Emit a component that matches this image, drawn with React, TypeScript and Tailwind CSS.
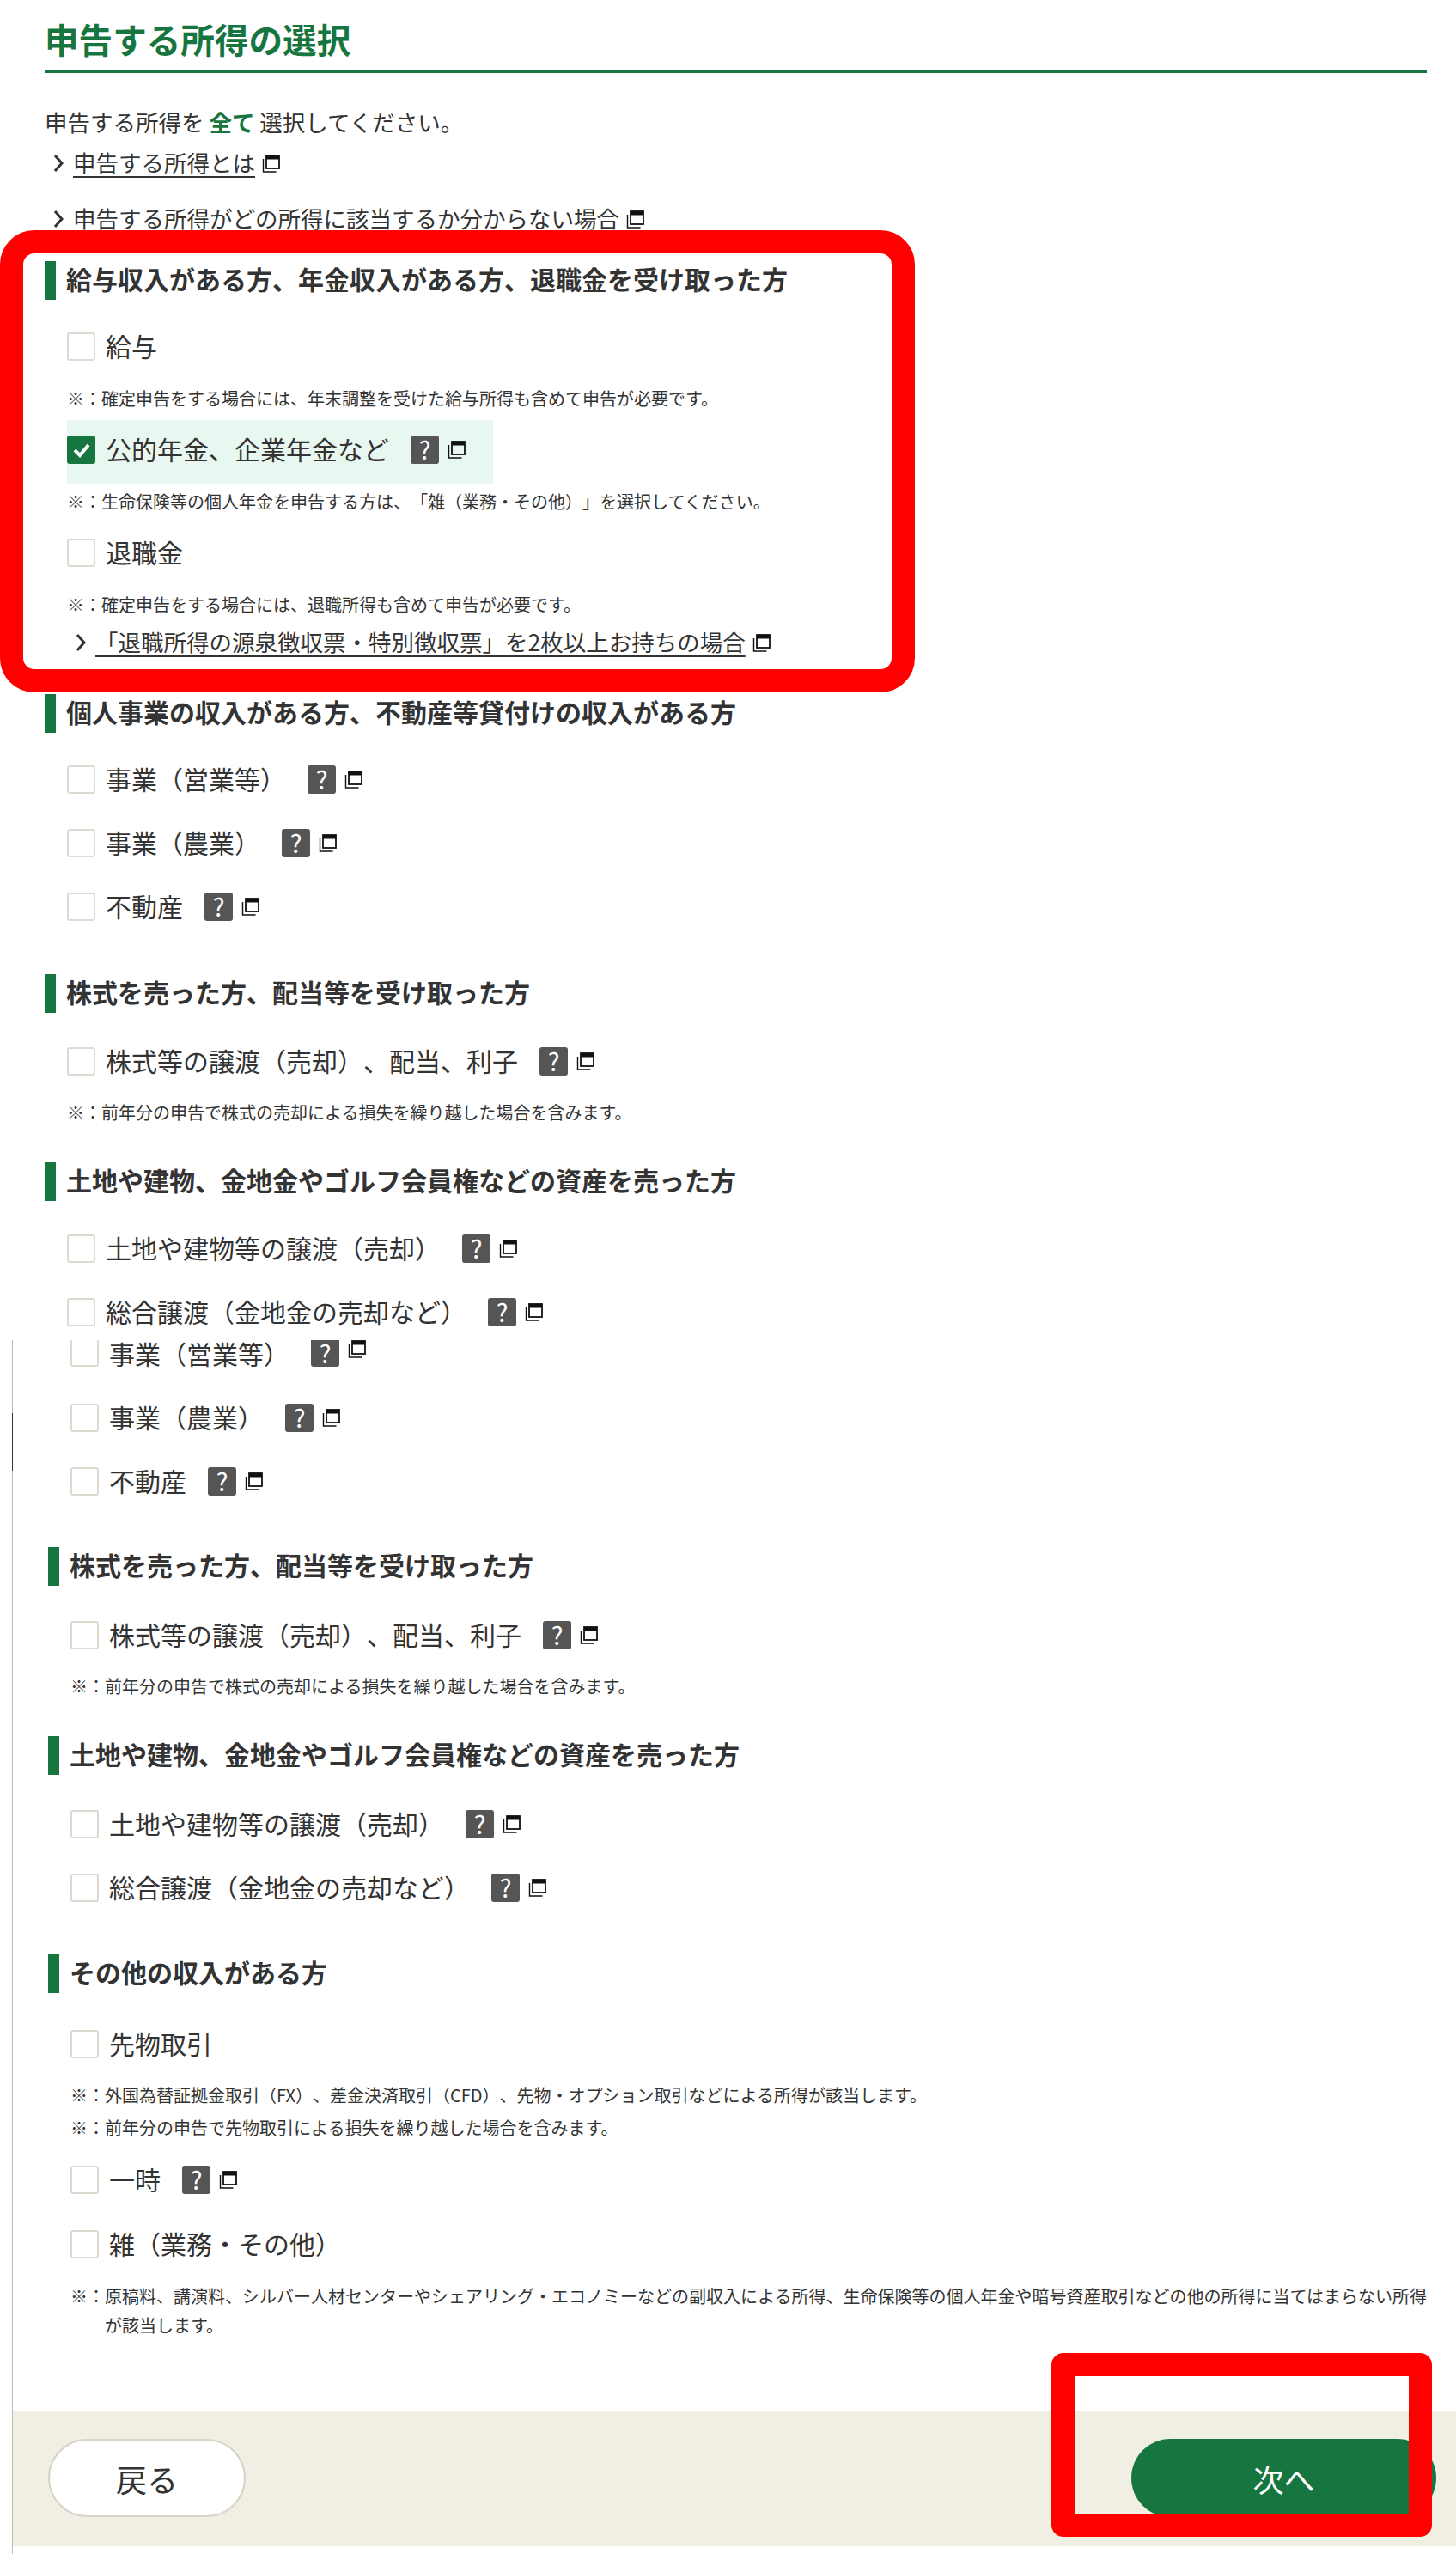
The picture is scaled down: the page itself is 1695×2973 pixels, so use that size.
import React from "react";

const FONT = "font-['Noto_Sans_CJK_JP','Noto_Sans',sans-serif] [text-spacing-trim:space-all]";

// small "opens in new window" mark
const NewWindow = () => (
  <svg width="21" height="21" viewBox="0 0 21 21" className="shrink-0">
    <rect x="5" y="1" width="15" height="15" fill="none" stroke="#111" strokeWidth="1.8" />
    <rect x="5" y="1" width="15" height="4.5" fill="#111" />
    <path d="M1.5 5v15h15" fill="none" stroke="#111" strokeWidth="1.4" />
  </svg>
);

const Help = ({ cut }: { cut?: boolean }) => (
  <span
    className={`ml-[25px] mr-[10px] flex w-[33px] shrink-0 items-center justify-center bg-[#555555] pb-[2px] text-[29px] leading-none text-white ${
      cut ? "h-[31px] rounded-b-[3px]" : "h-[33px] rounded-[3px]"
    }`}
  >
    ?
  </span>
);

const Chevron = () => (
  <svg width="12" height="22" viewBox="0 0 12 22" className="shrink-0">
    <path d="M2 2l8 9-8 9" fill="none" stroke="#333" strokeWidth="3" />
  </svg>
);

const SectionHead = ({ title, className }: { title: string; className: string }) => (
  <h3
    className={`flex h-[45px] items-center border-l-[13px] border-[#17763f] pb-[5px] pl-[12px] text-[30px] leading-none font-bold text-[#333333] ${className}`}
  >
    {title}
  </h3>
);

const Option = ({
  label,
  help,
  checked,
  cut,
  className = "",
}: {
  label: string;
  help?: boolean;
  checked?: boolean;
  cut?: boolean;
  className?: string;
}) => (
  <div className={`flex items-center ${cut ? "h-[31px] items-start" : "h-[33px]"} ${className}`}>
    {checked ? (
      <span className="flex h-[33px] w-[33px] shrink-0 items-center justify-center rounded-[3px] bg-[#17763f]">
        <svg width="22" height="18" viewBox="0 0 22 18">
          <path d="M3 9l6 6L19 3" fill="none" stroke="#fff" strokeWidth="4" />
        </svg>
      </span>
    ) : cut ? (
      <span className="h-[31px] w-[33px] shrink-0 rounded-b-[3px] border-x-2 border-b-2 border-[#dedad2] bg-white" />
    ) : (
      <span className="h-[33px] w-[33px] shrink-0 rounded-[3px] border-2 border-[#dedad2] bg-white" />
    )}
    <span
      className={`ml-[12px] text-[30px] leading-none whitespace-nowrap text-[#333333] ${cut ? "" : "pb-[4px]"}`}
    >
      {label}
    </span>
    {help && <Help cut={cut} />}
    {help && <NewWindow />}
  </div>
);

const Note = ({ text, className }: { text: string; className: string }) => (
  <p
    className={`flex h-[28px] items-center pb-[2px] text-[20px] leading-none whitespace-nowrap text-[#333333] ${className}`}
  >
    {text}
  </p>
);

const DocLink = ({ text, className }: { text: string; className: string }) => (
  <div
    className={`flex h-[36px] items-center text-[26.5px] leading-none whitespace-nowrap text-[#333333] ${className}`}
  >
    <Chevron />
    <span className="ml-[11px] pb-[2px] underline underline-offset-[5px]">{text}</span>
    <span className="ml-[8px]">
      <NewWindow />
    </span>
  </div>
);

export default function App() {
  return (
    <div className={`relative h-[2973px] w-[1695px] overflow-hidden bg-white ${FONT}`}>
      {/* upper capture */}
      <div className="h-[1560px] overflow-hidden pr-[34px] pl-[52px]">
        <h2 className="border-b-[3px] border-[#17763f] pt-[23px] pb-[15px] text-[39.6px] leading-[44px] font-bold text-[#17763f]">
          申告する所得の選択
        </h2>
        <p className="mt-[40px] flex h-[36px] items-center pb-[2px] text-[26.5px] leading-none whitespace-pre text-[#333333]">
          申告する所得を <b className="text-[#17763f]">全て</b> 選択してください。
        </p>
        <DocLink text="申告する所得とは" className="mt-[11px] ml-[10px]" />
        <DocLink text="申告する所得がどの所得に該当するか分からない場合" className="mt-[29px] ml-[10px]" />

        <SectionHead title="給与収入がある方、年金収入がある方、退職金を受け取った方" className="mt-[31px]" />
        <div className="pl-[26px]">
          <Option label="給与" className="mt-[38px]" />
          <Note text="※：確定申告をする場合には、年末調整を受けた給与所得も含めて申告が必要です。" className="mt-[31px]" />
          <div className="mt-[10px] w-[496px] bg-[#e8f7f0] pt-[18px] pb-[23px]">
            <Option label="公的年金、企業年金など" help checked />
          </div>
          <Note text="※：生命保険等の個人年金を申告する方は、「雑（業務・その他）」を選択してください。" className="mt-[8px]" />
          <Option label="退職金" className="mt-[28px]" />
          <Note text="※：確定申告をする場合には、退職所得も含めて申告が必要です。" className="mt-[31px]" />
          <DocLink text="「退職所得の源泉徴収票・特別徴収票」を2枚以上お持ちの場合" className="mt-[11px] ml-[10px]" />
        </div>

        <SectionHead title="個人事業の収入がある方、不動産等貸付けの収入がある方" className="mt-[42px]" />
        <div className="pl-[26px]">
          <Option label="事業（営業等）" help className="mt-[38px]" />
          <Option label="事業（農業）" help className="mt-[41px]" />
          <Option label="不動産" help className="mt-[41px]" />
        </div>

        <SectionHead title="株式を売った方、配当等を受け取った方" className="mt-[62px]" />
        <div className="pl-[26px]">
          <Option label="株式等の譲渡（売却）、配当、利子" help className="mt-[40px]" />
          <Note text="※：前年分の申告で株式の売却による損失を繰り越した場合を含みます。" className="mt-[30px]" />
        </div>

        <SectionHead title="土地や建物、金地金やゴルフ会員権などの資産を売った方" className="mt-[43px]" />
        <div className="pl-[26px]">
          <Option label="土地や建物等の譲渡（売却）" help className="mt-[39px]" />
          <Option label="総合譲渡（金地金の売却など）" help className="mt-[41px]" />
        </div>
      </div>

      {/* lower capture */}
      <div className="relative ml-[14px] h-[1413px] border-l border-[#bbbbbb]">
        <div className="absolute top-[85px] -left-px h-[67px] w-px bg-[#333333]" />
        <div className="h-[1246px] pr-[24px] pl-[41px]">
          <div className="pl-[26px]">
            <Option label="事業（営業等）" help cut />
            <Option label="事業（農業）" help className="mt-[43px]" />
            <Option label="不動産" help className="mt-[41px]" />
          </div>

          <SectionHead title="株式を売った方、配当等を受け取った方" className="mt-[60px]" />
          <div className="pl-[26px]">
            <Option label="株式等の譲渡（売却）、配当、利子" help className="mt-[41px]" />
            <Note text="※：前年分の申告で株式の売却による損失を繰り越した場合を含みます。" className="mt-[30px]" />
          </div>

          <SectionHead title="土地や建物、金地金やゴルフ会員権などの資産を売った方" className="mt-[43px]" />
          <div className="pl-[26px]">
            <Option label="土地や建物等の譲渡（売却）" help className="mt-[41px]" />
            <Option label="総合譲渡（金地金の売却など）" help className="mt-[41px]" />
          </div>

          <SectionHead title="その他の収入がある方" className="mt-[61px]" />
          <div className="pl-[26px]">
            <Option label="先物取引" className="mt-[43px]" />
            <Note text="※：外国為替証拠金取引（FX）、差金決済取引（CFD）、先物・オプション取引などによる所得が該当します。" className="mt-[30px]" />
            <Note text="※：前年分の申告で先物取引による損失を繰り越した場合を含みます。" className="mt-[10px]" />
            <Option label="一時" help className="mt-[29px]" />
            <Option label="雑（業務・その他）" className="mt-[42px]" />
            <div className="mt-[27px] flex text-[20px] leading-[34px] text-[#333333]">
              <span className="w-[40px] shrink-0">※：</span>
              <p>
                原稿料、講演料、シルバー人材センターやシェアリング・エコノミーなどの副収入による所得、生命保険等の個人年金や暗号資産取引などの他の所得に当てはまらない所得が該当します。
              </p>
            </div>
          </div>
        </div>

        <div className="flex h-[158px] items-start justify-between bg-[#f1efe4] pt-[33px] pr-[23px] pl-[41px]">
          <button className="flex h-[91px] w-[230px] items-center justify-center rounded-full border-2 border-[#d8d3c7] bg-white text-[36px] text-[#333333]">
            戻る
          </button>
          <button className="flex h-[91px] w-[355px] items-center justify-center rounded-full bg-[#17763f] text-[36px] text-white">
            次へ
          </button>
        </div>
      </div>

      {/* red annotations */}
      <div className="absolute top-[268px] left-0 h-[538px] w-[1065px] rounded-[40px] border-[27px] border-[#ff0000]" />
      <div className="absolute top-[2739px] left-[1224px] h-[214px] w-[443px] rounded-[14px] border-[27px] border-[#ff0000]" />
    </div>
  );
}
